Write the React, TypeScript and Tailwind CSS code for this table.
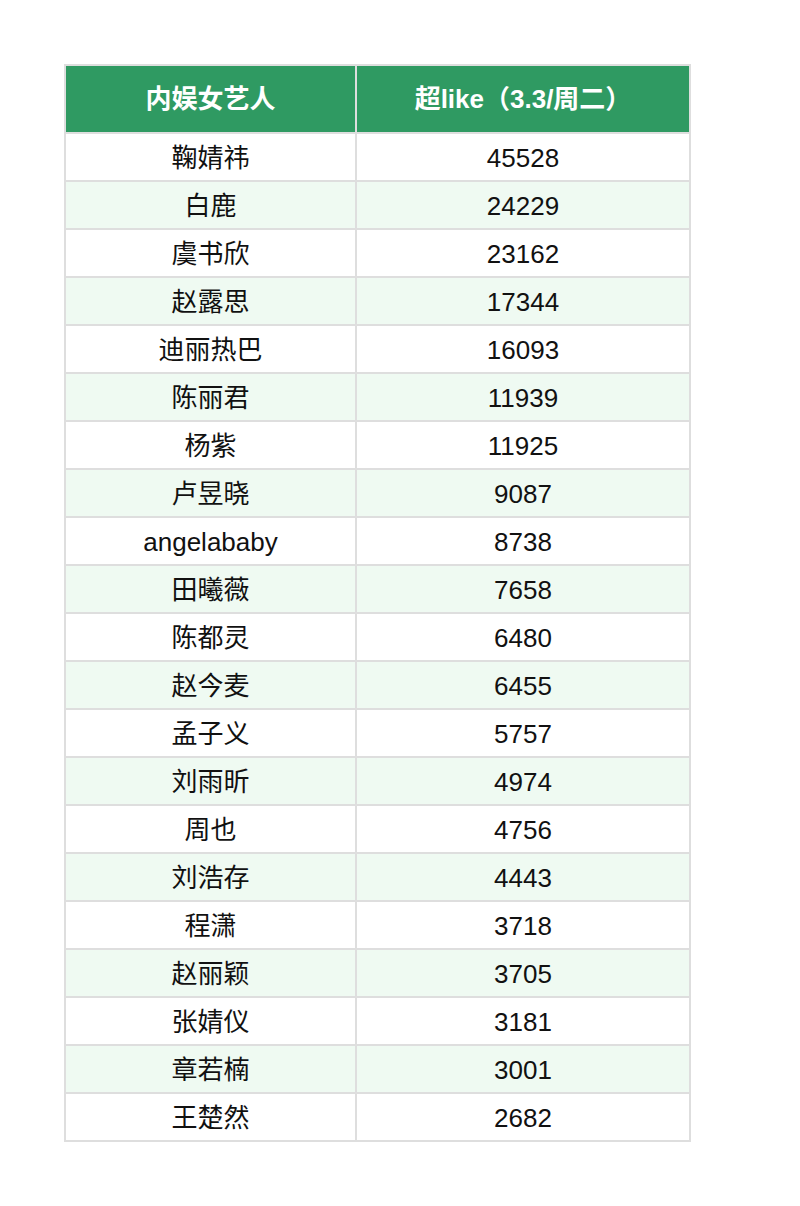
import React from "react";

const rows: [string, string][] = [
  ["鞠婧祎", "45528"],
  ["白鹿", "24229"],
  ["虞书欣", "23162"],
  ["赵露思", "17344"],
  ["迪丽热巴", "16093"],
  ["陈丽君", "11939"],
  ["杨紫", "11925"],
  ["卢昱晓", "9087"],
  ["angelababy", "8738"],
  ["田曦薇", "7658"],
  ["陈都灵", "6480"],
  ["赵今麦", "6455"],
  ["孟子义", "5757"],
  ["刘雨昕", "4974"],
  ["周也", "4756"],
  ["刘浩存", "4443"],
  ["程潇", "3718"],
  ["赵丽颖", "3705"],
  ["张婧仪", "3181"],
  ["章若楠", "3001"],
  ["王楚然", "2682"],
];

export default function App() {
  return (
    <div
      className="w-[800px] h-[1206px] bg-white pt-[64px] pl-[64px]"
      style={{ fontFamily: '"Liberation Sans", "Noto Sans CJK SC", sans-serif' }}
    >
      <table className="border-collapse w-[625px] table-fixed">
        <colgroup>
          <col className="w-[291px]" />
          <col className="w-[334px]" />
        </colgroup>
        <thead>
          <tr className="h-[68px] bg-[#2f9a62]">
            <th className="border-2 border-[#dedede] text-white font-bold text-[26px] text-center align-middle leading-none">
              内娱女艺人
            </th>
            <th className="border-2 border-[#dedede] text-white font-bold text-[26px] text-center align-middle leading-none">
              超like（3.3/周二）
            </th>
          </tr>
        </thead>
        <tbody>
          {rows.map(([name, val], i) => (
            <tr key={i} className={`h-[48px] ${i % 2 === 1 ? "bg-[#effaf2]" : "bg-white"}`}>
              <td className="border-2 border-[#dedede] text-[#111] text-[26px] text-center align-middle leading-none pt-[2px]">
                {name}
              </td>
              <td className="border-2 border-[#dedede] text-[#111] text-[26px] text-center align-middle leading-none pt-[2px]">
                {val}
              </td>
            </tr>
          ))}
        </tbody>
      </table>
    </div>
  );
}
